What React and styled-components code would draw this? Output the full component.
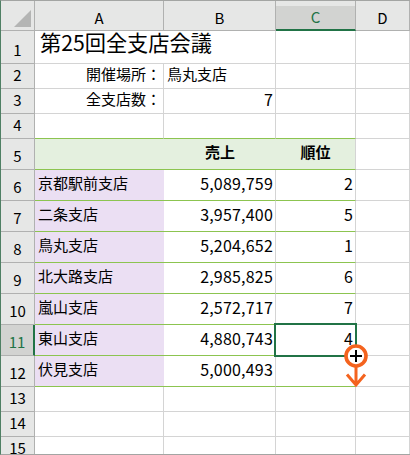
import styled, { createGlobalStyle } from 'styled-components';

const GlobalStyle = createGlobalStyle`
  html, body {
    margin: 0;
    padding: 0;
    background: #fff;
  }
`;

const COLS = '34px 129px 112px 80px 54px';
const GRID = '#d4d4d4';
const GREEN = '#8cc450';
const HEAD_LINE = '#b0b1b0';

const Sheet = styled.div`
  position: relative;
  width: 410px;
  height: 455px;
  overflow: hidden;
  box-sizing: border-box;
  border-left: 1px solid #4f8064;
  border-top: 1px solid #a3a5a3;
  border-bottom: 1px solid #a3a5a3;
  font-family: "Noto Sans CJK JP", "Noto Sans", sans-serif;
  font-size: 15px;
  color: #000;
`;

const Row = styled.div`
  display: grid;
  grid-template-columns: ${COLS};
  height: ${p => p.$h}px;
`;

const Corner = styled.div`
  position: relative;
  background: #e6e7e6;
  border-right: 1px solid ${HEAD_LINE};
  border-bottom: 1px solid ${HEAD_LINE};
  box-sizing: border-box;
`;

const CornerMark = styled.svg`
  position: absolute;
  right: 3px;
  bottom: 3px;
  display: block;
`;

const ColHead = styled.div`
  box-sizing: border-box;
  display: flex;
  align-items: center;
  justify-content: center;
  padding-top: 4px;
  line-height: 18px;
  background: ${p => (p.$active ? `linear-gradient(#e6e7e6 5px, #d2d3d1 5px)` : '#e6e7e6')};
  color: ${p => (p.$active ? '#217346' : '#000')};
  border-right: 1px solid ${HEAD_LINE};
  border-bottom: ${p => (p.$active ? '2px solid #217346' : `1px solid ${HEAD_LINE}`)};
`;

const RowHead = styled.div`
  box-sizing: border-box;
  display: flex;
  align-items: flex-end;
  justify-content: center;
  padding-bottom: ${p => (p.$tail ? 0 : 5)}px;
  line-height: ${p => (p.$tail ? 12 : 16)}px;
  background: ${p => (p.$active ? '#d2d3d1' : '#e6e7e6')};
  color: ${p => (p.$active ? '#217346' : '#000')};
  border-right: ${p => (p.$active ? '2px solid #217346' : `1px solid ${HEAD_LINE}`)};
  border-bottom: ${p => (p.$tail ? 'none' : `1px solid ${HEAD_LINE}`)};
`;

const Cell = styled.div`
  box-sizing: border-box;
  display: flex;
  align-items: center;
  justify-content: ${p => (p.$right ? 'flex-end' : p.$center ? 'center' : 'flex-start')};
  padding: 0 ${p => (p.$right ? 2 : 3)}px 4px;
  line-height: 18px;
  white-space: nowrap;
  font-weight: ${p => (p.$bold ? 700 : 400)};
  background: ${p => p.$bg || 'transparent'};
  border-right: ${p => (p.$noRight ? 'none' : `1px solid ${GRID}`)};
  border-bottom: ${p => (p.$tail ? 'none' : `1px solid ${p.$line || GRID}`)};
`;

const NumCell = styled(Cell)`
  justify-content: flex-end;
  padding-right: 2px;
  font-size: 16px;
  letter-spacing: 0.2px;
`;

const Title = styled(Cell)`
  font-size: 21.2px;
  line-height: 22px;
  padding: 0 0 10px 5px;
  border-right: none;
`;

const Selected = styled.div`
  position: absolute;
  left: 273px;
  top: 322px;
  width: 83px;
  height: 34px;
  box-sizing: border-box;
  border: 2px solid #217346;
  pointer-events: none;
`;

const FillCursor = styled.svg`
  position: absolute;
  left: 339px;
  top: 341px;
  display: block;
`;

const stores = [
  ['京都駅前支店', '5,089,759', 2],
  ['二条支店', '3,957,400', 5],
  ['鳥丸支店', '5,204,652', 1],
  ['北大路支店', '2,985,825', 6],
  ['嵐山支店', '2,572,717', 7],
  ['東山支店', '4,880,743', 4],
  ['伏見支店', '5,000,493', ''],
];

const PURPLE = '#ebdff3';
const HEADER_BG = '#e4f0df';

export default function App() {
  return (
    <Sheet>
      <GlobalStyle />
      <Row $h={30}>
        <Corner>
          <CornerMark width="17" height="17" viewBox="0 0 17 17">
            <polygon points="17,0 17,17 0,17" fill="#b4b5b4" />
          </CornerMark>
        </Corner>
        <ColHead>A</ColHead>
        <ColHead>B</ColHead>
        <ColHead $active>C</ColHead>
        <ColHead>D</ColHead>
      </Row>

      <Row $h={33}>
        <RowHead>1</RowHead>
        <Title>第25回全支店会議</Title>
        <Cell />
        <Cell />
        <Cell />
      </Row>
      <Row $h={25}>
        <RowHead>2</RowHead>
        <Cell $right>開催場所：</Cell>
        <Cell>鳥丸支店</Cell>
        <Cell />
        <Cell />
      </Row>
      <Row $h={25}>
        <RowHead>3</RowHead>
        <Cell $right>全支店数：</Cell>
        <NumCell>7</NumCell>
        <Cell />
        <Cell />
      </Row>
      <Row $h={25}>
        <RowHead>4</RowHead>
        <Cell $line={GREEN} />
        <Cell $line={GREEN} />
        <Cell $line={GREEN} />
        <Cell />
      </Row>

      <Row $h={31}>
        <RowHead>5</RowHead>
        <Cell $bg={HEADER_BG} $line={GREEN} $noRight />
        <Cell $bg={HEADER_BG} $line={GREEN} $noRight $center $bold>売上</Cell>
        <Cell $bg={HEADER_BG} $line={GREEN} $center $bold>順位</Cell>
        <Cell />
      </Row>

      {stores.map(([name, sales, rank], i) => (
        <Row $h={31} key={name}>
          <RowHead $active={i === 5}>{i + 6}</RowHead>
          <Cell $bg={PURPLE} $line={GREEN} $noRight>{name}</Cell>
          <NumCell $line={GREEN}>{sales}</NumCell>
          <NumCell $line={GREEN}>{rank}</NumCell>
          <Cell />
        </Row>
      ))}

      {[13, 14].map(n => (
        <Row $h={25} key={n}>
          <RowHead>{n}</RowHead>
          <Cell />
          <Cell />
          <Cell />
          <Cell />
        </Row>
      ))}
      <Row $h={17}>
        <RowHead $tail>15</RowHead>
        <Cell $tail />
        <Cell $tail />
        <Cell $tail />
        <Cell $tail />
      </Row>

      <Selected />
      <FillCursor width="32" height="50" viewBox="0 0 32 50">
        <circle cx="16" cy="14" r="10" fill="#fff" stroke="#f4631e" strokeWidth="3.6" />
        <path d="M16 24V43M7 32.5L16 43L25 32.5" fill="none" stroke="#f4631e" strokeWidth="3" />
        <path d="M16 8V20M10 14H22" fill="none" stroke="#000" strokeWidth="2" />
      </FillCursor>
    </Sheet>
  );
}
